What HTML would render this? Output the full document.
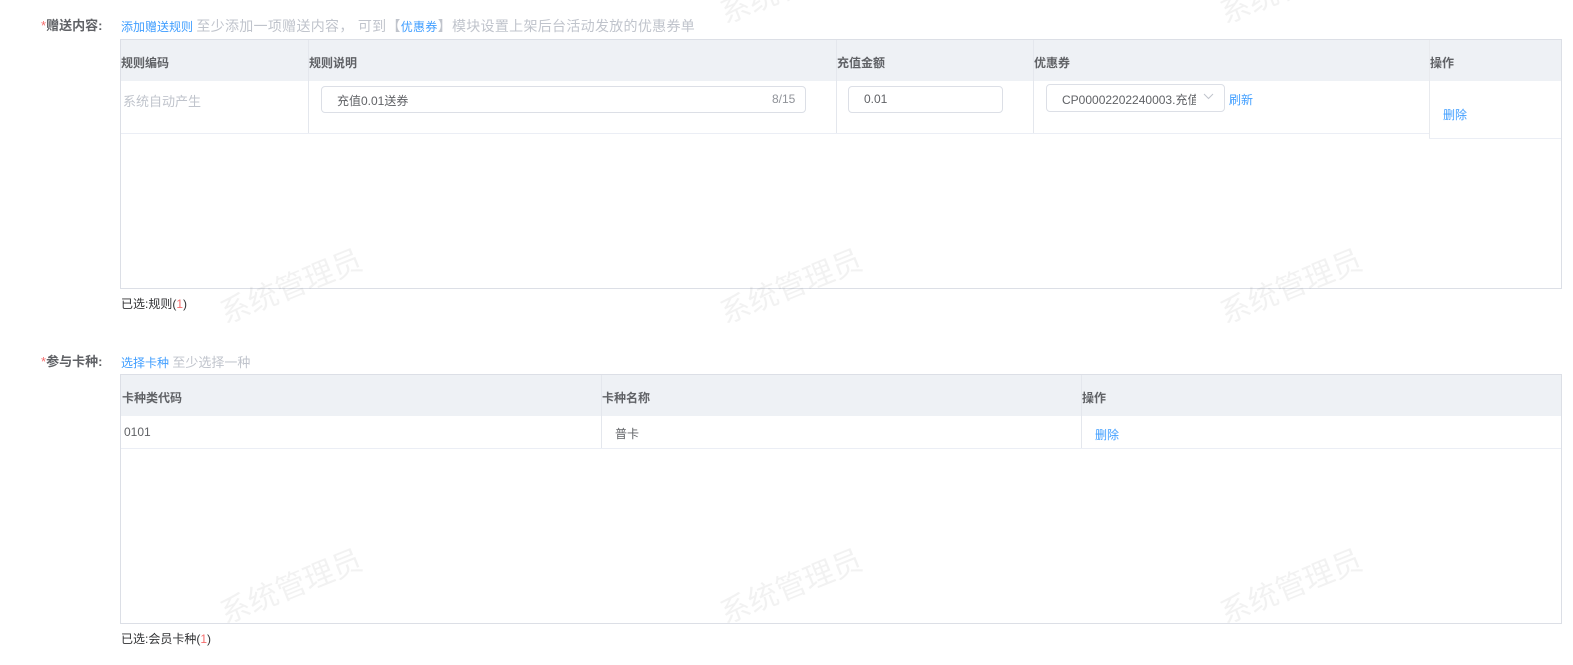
<!DOCTYPE html><html><head><meta charset="utf-8"><style>
body{margin:0;width:1573px;height:665px;background:#fff;position:relative;overflow:hidden;font-family:"Liberation Sans","Noto Sans CJK SC",sans-serif;font-size:12px;color:#606266}
.a{position:absolute;white-space:nowrap}
.lbl{font-size:13px;font-weight:bold;color:#606266}
.star{color:#f56c6c;font-weight:normal}
.blue{color:#409eff}.gray{color:#c0c4cc}
.box{position:absolute;border:1px solid #dcdfe6;box-sizing:border-box}
.hd{position:absolute;background:#eef1f5}
.v{position:absolute;width:1px;background:#e4e7ed}
.h{position:absolute;height:1px;background:#ebeef5}
.th{font-weight:bold;color:#606266}
.inp{position:absolute;border:1px solid #dcdfe6;border-radius:4px;box-sizing:border-box;background:#fff}
.wm{position:absolute;font-size:30px;color:rgba(0,0,0,0.05);transform:rotate(-22deg);white-space:nowrap}
</style></head><body>
<div class="a lbl" style="left:41px;top:15px"><span class="star">*</span>赠送内容:</div>
<div class="a" style="left:121px;top:16px"><span class="blue">添加赠送规则</span> <span class="gray" style="font-size:14px;letter-spacing:0.3px">至少添加一项赠送内容， 可到【<span class="blue" style="font-size:12px">优惠券</span>】模块设置上架后台活动发放的优惠券单</span></div>
<div class="box" style="left:120px;top:39px;width:1442px;height:250px"></div>
<div class="hd" style="left:121px;top:40px;width:1440px;height:41px"></div>
<div class="v" style="left:308px;top:40px;height:93px"></div>
<div class="v" style="left:836px;top:40px;height:93px"></div>
<div class="v" style="left:1033px;top:40px;height:93px"></div>
<div class="v" style="left:1429px;top:40px;height:99px;background:#e8eaee"></div>
<div class="h" style="left:121px;top:133px;width:1308px"></div>
<div class="h" style="left:1429px;top:138px;width:132px"></div>
<div class="a th" style="left:121px;top:54px">规则编码</div>
<div class="a th" style="left:309px;top:54px">规则说明</div>
<div class="a th" style="left:837px;top:54px">充值金额</div>
<div class="a th" style="left:1034px;top:54px">优惠券</div>
<div class="a th" style="left:1430px;top:54px">操作</div>
<div class="a gray" style="left:123px;top:91px;font-size:13px">系统自动产生</div>
<div class="inp" style="left:321px;top:86px;width:485px;height:27px"></div>
<div class="a" style="left:337px;top:92px">充值0.01送券</div>
<div class="a" style="left:772px;top:92px;color:#909399">8/15</div>
<div class="inp" style="left:848px;top:86px;width:155px;height:27px"></div>
<div class="a" style="left:864px;top:92px">0.01</div>
<div class="inp" style="left:1046px;top:84px;width:179px;height:28px"></div>
<div class="a" style="left:1062px;top:91px;width:134px;overflow:hidden">CP00002202240003.充值</div>
<svg class="a" style="left:1203px;top:93px" width="11" height="8"><path d="M1 1l4.5 4.5L10 1" fill="none" stroke="#c0c4cc" stroke-width="1"/></svg>
<div class="a blue" style="left:1229px;top:91px">刷新</div>
<div class="a blue" style="left:1443px;top:106px">删除</div>
<div class="a" style="left:121px;top:295px;color:#303133">已选:规则(<span style="color:#f56c6c">1</span>)</div>

<div class="a lbl" style="left:41px;top:351px"><span class="star">*</span>参与卡种:</div>
<div class="a" style="left:121px;top:352px"><span class="blue">选择卡种</span> <span class="gray" style="font-size:13px">至少选择一种</span></div>
<div class="box" style="left:120px;top:374px;width:1442px;height:250px"></div>
<div class="hd" style="left:121px;top:375px;width:1440px;height:41px"></div>
<div class="v" style="left:601px;top:375px;height:73px"></div>
<div class="v" style="left:1081px;top:375px;height:73px"></div>
<div class="h" style="left:121px;top:448px;width:1440px"></div>
<div class="a th" style="left:122px;top:389px">卡种类代码</div>
<div class="a th" style="left:602px;top:389px">卡种名称</div>
<div class="a th" style="left:1082px;top:389px">操作</div>
<div class="a" style="left:124px;top:425px">0101</div>
<div class="a" style="left:615px;top:425px">普卡</div>
<div class="a blue" style="left:1095px;top:426px">删除</div>
<div class="a" style="left:121px;top:630px;color:#303133">已选:会员卡种(<span style="color:#f56c6c">1</span>)</div>

<div class="wm" style="left:215px;top:262px">系统管理员</div>
<div class="wm" style="left:715px;top:262px">系统管理员</div>
<div class="wm" style="left:1215px;top:262px">系统管理员</div>
<div class="wm" style="left:215px;top:562px">系统管理员</div>
<div class="wm" style="left:715px;top:562px">系统管理员</div>
<div class="wm" style="left:1215px;top:562px">系统管理员</div>
<div class="wm" style="left:715px;top:-38px">系统管理员</div>
<div class="wm" style="left:1215px;top:-38px">系统管理员</div>
</body></html>
